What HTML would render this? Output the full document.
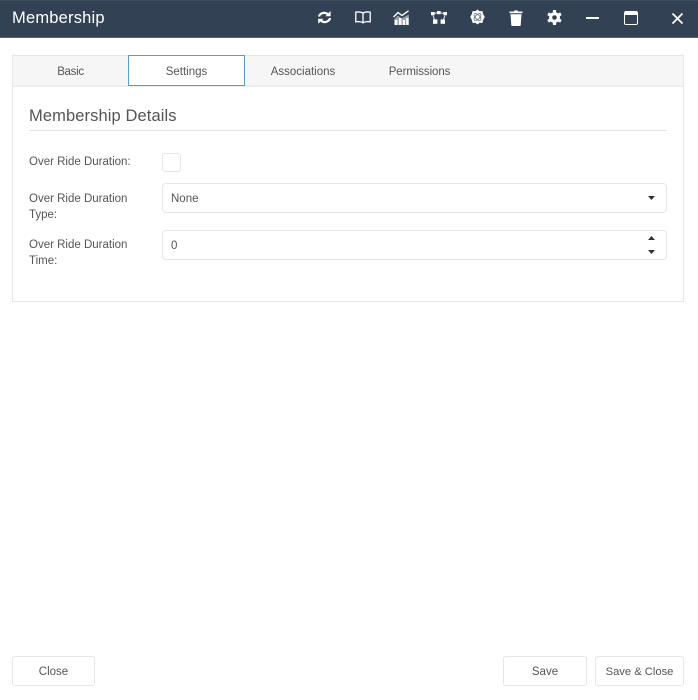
<!DOCTYPE html>
<html lang="en"><head><meta charset="utf-8"><title>Membership</title>
<style>
html,body{margin:0;padding:0;background:#fff}
body{position:relative;width:698px;height:700px;overflow:hidden;font-family:"Liberation Sans",sans-serif;color:#555;font-size:12px}
.a{position:absolute}
.t{position:absolute;white-space:nowrap;line-height:16px}
.tab{position:absolute;top:57px;height:30px;line-height:30px;text-align:center;font-size:11.5px;color:#555}
.btn{position:absolute;top:656px;height:28px;line-height:30px;border:1px solid #e6e6e6;border-radius:3px;text-align:center;background:#fff;font-size:11.5px;color:#555}
.in{position:absolute;left:162px;width:503px;height:28px;border:1px solid #e6e6e6;border-radius:4px;background:#fff}
svg{position:absolute;overflow:visible}
</style></head><body>
<div class="a" style="left:0;top:0;width:698px;height:38px;background:#334155;border-top:1px solid #3f4d61;border-bottom:1px solid #56606e;box-sizing:border-box"></div>
<div class="t" style="left:12px;top:8px;font-size:16.5px;line-height:20px;color:#fff;letter-spacing:.2px">Membership</div>

<!-- refresh -->
<svg style="left:317px;top:10px" width="15" height="15" viewBox="0 0 15 15" fill="none" stroke="#fff" stroke-width="2.2"><path d="M2 6.5C2.8 3.6 6.8 1.8 10 3.6L11.6 5"/><path d="M13 8C12.6 11 8.4 13.2 5 11.4L3.4 10"/><path d="M13.6 1V6.2H8.4Z" fill="#fff" stroke="none"/><path d="M1.2 13.8V8.8H6.4Z" fill="#fff" stroke="none"/></svg>
<!-- book -->
<svg style="left:355px;top:11px" width="16" height="13" viewBox="0 0 16 13" fill="none" stroke="#fff" stroke-width="1.3"><path d="M8 2.2C6.5 1 3.5 .8 .8 1.1V10.8C3.5 10.5 6.5 10.8 8 11.9C9.5 10.8 12.5 10.5 15.2 10.8V1.1C12.5 .8 9.5 1 8 2.2ZM8 2.2V11.9"/></svg>
<!-- chart -->
<svg style="left:393px;top:10px" width="17" height="15" viewBox="0 0 17 15" fill="none" stroke="#fff"><path d="M.5 7L5 2.5L9 5.5L15.5 .8" stroke-width="1.4"/><path d="M1 9.5L5 5.5L8.5 8.5L15.8 4.5V15H1Z" fill="#9aa4b0" stroke="none"/><path d="M2 10h2.4v5h-2.4zM6 8h2.4v7h-2.4zM9.8 10h2.2v5h-2.2zM13.2 8h2.4v7h-2.4z" fill="#fff" stroke="none"/></svg>
<!-- nodes -->
<svg style="left:431px;top:11px" width="16" height="13" viewBox="0 0 16 13" fill="#fff"><rect x="0" y="1" width="3.6" height="3.2"/><rect x="6" y="0" width="3.6" height="3.2"/><rect x="12.4" y="1" width="3.6" height="3.2"/><rect x="2" y="8.4" width="4.4" height="4.4"/><rect x="9.6" y="8.4" width="4.4" height="4.4"/><path d="M3.4 2.4L6.2 1.8M9.6 1.8L12.6 2.4M2 4.4L3.6 8.8M14 4.4L12.4 8.8" stroke="#fff" stroke-width=".9" fill="none"/></svg>
<!-- hex atom -->
<svg style="left:470px;top:9px" width="15" height="16" viewBox="0 0 15 16"><path d="M7.5 .5L9.6 2.2L12.4 2L13 4.8L14.8 8L13 11.2L12.4 14L9.6 13.8L7.5 15.5L5.4 13.8L2.6 14L2 11.2L.2 8L2 4.8L2.6 2L5.4 2.2Z" fill="#fff"/><ellipse cx="7.5" cy="8" rx="4.4" ry="2.2" fill="none" stroke="#5d6b7d" stroke-width=".8" transform="rotate(45 7.5 8)"/><ellipse cx="7.5" cy="8" rx="4.4" ry="2.2" fill="none" stroke="#5d6b7d" stroke-width=".8" transform="rotate(-45 7.5 8)"/></svg>
<!-- trash -->
<svg style="left:509px;top:10px" width="14" height="16" viewBox="0 0 14 16" fill="#fff"><path d="M.5 1.5H5L5.6 .4H8.4L9 1.5H13.5V3.2H.5Z"/><path d="M1.5 4.2H12.5L11.7 15.2Q11.6 16 10.8 16H3.2Q2.4 16 2.3 15.2Z"/></svg>
<!-- gear -->
<svg style="left:547px;top:10px" width="15" height="15" viewBox="0 0 15 15"><g fill="#fff"><circle cx="7.5" cy="7.5" r="5.4"/><rect x="5.9" y="0" width="3.2" height="15" rx=".6"/><rect x="5.9" y="0" width="3.2" height="15" rx=".6" transform="rotate(60 7.5 7.5)"/><rect x="5.9" y="0" width="3.2" height="15" rx=".6" transform="rotate(120 7.5 7.5)"/></g><circle cx="7.5" cy="7.5" r="2.3" fill="#334155"/></svg>
<!-- minimize -->
<div class="a" style="left:586px;top:17px;width:13px;height:1.5px;background:#fff"></div>
<!-- maximize -->
<div class="a" style="left:623.5px;top:11px;width:12px;height:9px;border:1.5px solid #fff;border-top-width:4px;border-radius:2px;background:#334155"></div>
<!-- close -->
<svg style="left:672px;top:12.5px" width="11" height="11" viewBox="0 0 11 11" stroke="#fff" stroke-width="1.8" fill="none"><path d="M.5 .5L10.5 10.5M10.5 .5L.5 10.5"/></svg>

<!-- panel -->
<div class="a" style="left:12px;top:55px;width:670px;height:245px;border:1px solid #e6e6e6"></div>
<div class="a" style="left:13px;top:56px;width:670px;height:29px;background:#f6f6f6;border-bottom:2px solid #ececec"></div>
<div class="tab" style="left:13px;width:115px;letter-spacing:-.3px">Basic</div>
<div class="a" style="left:128px;top:55px;width:115px;height:29px;background:#fff;border:1px solid #5b9bd0"></div>
<div class="tab" style="left:128px;width:117px">Settings</div>
<div class="tab" style="left:245px;width:116px">Associations</div>
<div class="tab" style="left:361px;width:117px;letter-spacing:-.1px">Permissions</div>

<div class="t" style="left:29px;top:105px;font-size:16.5px;line-height:22px;color:#555;letter-spacing:.1px">Membership Details</div>
<div class="a" style="left:29px;top:130px;width:638px;height:1px;background:#e3e3e3"></div>

<div class="t" style="left:29px;top:154px;font-size:11.5px">Over Ride Duration:</div>
<div class="a" style="left:162px;top:153px;width:17px;height:17px;border:1px solid #e6e6e6;border-radius:3px"></div>

<div class="t" style="left:29px;top:191px;font-size:11.5px">Over Ride Duration</div>
<div class="t" style="left:29px;top:207px;font-size:11.5px">Type:</div>
<div class="in" style="top:183px"></div>
<div class="t" style="left:171px;top:191px;font-size:11.5px">None</div>
<svg style="left:648px;top:196px" width="7" height="4" viewBox="0 0 7 4"><path d="M0 0H7L3.5 4Z" fill="#333"/></svg>

<div class="t" style="left:29px;top:237px;font-size:11.5px">Over Ride Duration</div>
<div class="t" style="left:29px;top:253px;font-size:11.5px">Time:</div>
<div class="in" style="top:230px"></div>
<div class="t" style="left:171px;top:238px;font-size:11.5px">0</div>
<svg style="left:648px;top:236px" width="7" height="4" viewBox="0 0 7 4"><path d="M0 4H7L3.5 0Z" fill="#333"/></svg>
<svg style="left:648px;top:250px" width="7" height="4" viewBox="0 0 7 4"><path d="M0 0H7L3.5 4Z" fill="#333"/></svg>

<div class="btn" style="left:12px;width:81px">Close</div>
<div class="btn" style="left:503px;width:82px">Save</div>
<div class="btn" style="left:595px;width:87px;font-size:11.2px">Save &amp; Close</div>
</body></html>
